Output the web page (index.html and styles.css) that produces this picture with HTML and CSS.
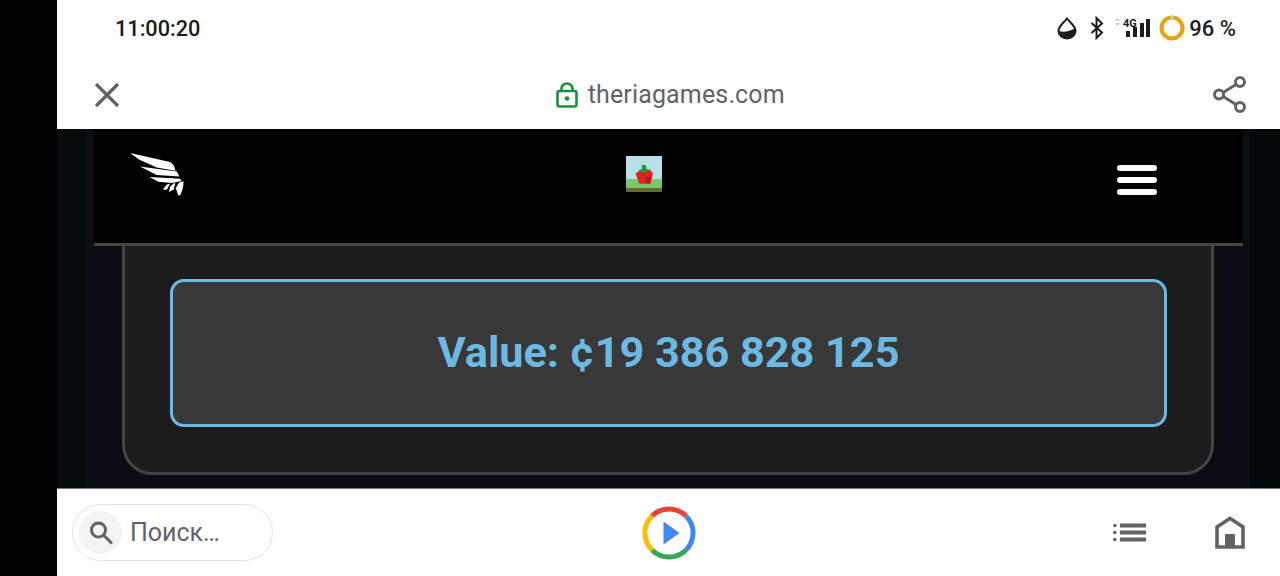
FILE: index.html
```html
<!DOCTYPE html>
<html lang="ru">
<head>
    <meta charset="UTF-8">
    <title>theriagames.com</title>
    <link rel="stylesheet" href="styles.css">
</head>
<body>
    <div class="cutout"></div>

    <div class="screen">
        <!-- Статус-бар -->
        <div class="status">
            <span class="clock">11:00:20</span>
            <div class="status-icons">
                <svg class="ic-drop" width="20" height="24" viewBox="0 0 20 24">
                    <path d="M10 2.500 C7 6.500 1.500 10 1.500 15 a8.500 7.500 0 0 0 17 0 C18.500 10 13 6.500 10 2.500 Z" fill="#fff" stroke="#1c1c1c" stroke-width="2"/>
                    <path d="M2 15 C7 16.500 12 15.500 18 12.500 C19 19 14 22 10 22 C6 22 2 19 2 15 Z" fill="#1c1c1c"/>
                </svg>
                <svg class="ic-bt" width="14" height="24" viewBox="0 0 14 24">
                    <path d="M1.500 7 L12 16.500 L6.500 22 V2 L12 7.500 L1.500 17" fill="none" stroke="#1c1c1c" stroke-width="2"/>
                </svg>
                <svg class="ic-net" width="38" height="24" viewBox="0 0 38 24">
                    <path d="M0 5 L2.500 2 L5 5 Z M0 7 L2.500 10 L5 7 Z" fill="#ccc"/>
                    <text x="8" y="11" class="net-label">4G</text>
                    <rect x="11" y="15" width="4" height="6" fill="#1c1c1c"/>
                    <rect x="18" y="11" width="4" height="10" fill="#1c1c1c"/>
                    <rect x="25" y="7" width="4" height="14" fill="#1c1c1c"/>
                    <rect x="31" y="3" width="4" height="18" fill="#1c1c1c"/>
                </svg>
                <svg class="ic-batt" width="26" height="26" viewBox="0 0 26 26">
                    <circle cx="13" cy="13" r="10.500" fill="none" stroke="#e5a50f" stroke-width="4"/>
                    <path d="M11.500 0.800 H14.500 V4.500 H11.500 Z" fill="#c8c8c8"/>
                </svg>
                <span class="batt-text">96 %</span>
            </div>
        </div>

        <!-- Панель браузера -->
        <div class="toolbar">
            <svg class="ic-close" width="28" height="28" viewBox="0 0 28 28">
                <path d="M3 3 L25 25 M25 3 L3 25" stroke="#5f6368" stroke-width="3.200" fill="none"/>
            </svg>
            <div class="address">
                <svg width="22" height="26" viewBox="0 0 22 26">
                    <rect x="1.500" y="9" width="19" height="15.500" rx="2" fill="none" stroke="#1e8e3e" stroke-width="2.600"/>
                    <path d="M5.500 9 V6.500 a5.500 5 0 0 1 11 0 V9" fill="none" stroke="#1e8e3e" stroke-width="2.600"/>
                    <circle cx="11" cy="16.500" r="2.300" fill="#1e8e3e"/>
                </svg>
                <span>theriagames.com</span>
            </div>
            <svg class="ic-share" width="36" height="40" viewBox="0 0 36 40">
                <path d="M28 7 L8 19.500 L28 32" stroke="#5f6368" stroke-width="3" fill="none"/>
                <circle cx="28" cy="7" r="4.500" fill="#fff" stroke="#5f6368" stroke-width="3"/>
                <circle cx="7" cy="19.500" r="4.500" fill="#fff" stroke="#5f6368" stroke-width="3"/>
                <circle cx="28" cy="32" r="4.500" fill="#fff" stroke="#5f6368" stroke-width="3"/>
            </svg>
        </div>

        <!-- Страница -->
        <div class="web">
            <div class="web-inner">
                <header class="site-header">
                    <svg class="site-logo" width="56" height="44" viewBox="0 0 56 44" fill="#fff">
                        <path d="M0 0 L40 9 C43 10.500 44.500 13.500 45.500 17.700 L26.700 14.500 L9 6.500 Z"/>
                        <path d="M10 13.500 L46.700 18.400 L49.500 23.500 L26.700 22 Z"/>
                        <path d="M19.500 24 L50 25.800 L51.700 28 L41.700 30 L28.300 28.800 Z"/>
                        <path d="M32.800 36.500 L37 31.500 L40 30.800 L36.800 36.800 Z"/>
                        <path d="M38.800 39 L40.500 33 L45.300 29.500 L43.800 36.500 Z"/>
                        <path d="M48.300 42.500 L45.800 35.300 L49 29.500 L53.500 28.300 C53.800 33 52.300 38 50.300 42 Z"/>
                    </svg>
                    <svg class="site-game" width="36" height="36" viewBox="0 0 36 36">
                        <rect width="36" height="36" fill="#b8dfe8"/>
                        <rect y="23" width="36" height="10" fill="#7dc66a"/>
                        <rect y="32" width="36" height="4" fill="#5c6b38"/>
                        <path d="M15.500 9 H20 L20.500 13 L25 14 L24 17 H12 L13 14 L16 13 Z" fill="#2f8f38"/>
                        <path d="M9.500 17 L14 15.500 L18 17 L24 14.500 L27 17 L24.500 28 L13 27.500 Z" fill="#e0201f"/>
                        <rect x="20" y="21" width="4" height="6" fill="#a81c22"/>
                    </svg>
                    <div class="burger"><i></i><i></i><i></i></div>
                </header>
                <div class="panel">
                    <div class="value-box">Value: ¢19 386 828 125</div>
                </div>
            </div>
        </div>

        <!-- Нижняя панель -->
        <div class="bottom">
            <div class="search">
                <span class="search-icon">
                    <svg width="28" height="28" viewBox="0 0 28 28">
                        <circle cx="11.500" cy="11" r="7" fill="none" stroke="#5f6368" stroke-width="3"/>
                        <path d="M16.500 16 L25 24.500" stroke="#5f6368" stroke-width="3"/>
                    </svg>
                </span>
                <span class="search-text">Поиск…</span>
            </div>
            <svg class="play" width="54" height="54" viewBox="0 0 54 54" fill="none" stroke-width="5">
                <path d="M10 10 A24 24 0 0 1 44 10" stroke="#ea4335"/>
                <path d="M44 10 A24 24 0 0 1 44 44" stroke="#4285f4"/>
                <path d="M44 44 A24 24 0 0 1 10 44" stroke="#34a853"/>
                <path d="M10 44 A24 24 0 0 1 10 10" stroke="#fbbc04"/>
                <path d="M21.500 15.500 L37.500 27 L21.500 38.500 Z" fill="#4285f4" stroke="none"/>
            </svg>
            <div class="bottom-right">
                <svg width="33" height="20" viewBox="0 0 33 20" fill="#5f6368">
                    <circle cx="1.800" cy="2.500" r="1.800"/>
                    <circle cx="1.800" cy="9.500" r="1.800"/>
                    <circle cx="1.800" cy="16.500" r="1.800"/>
                    <rect x="7" y="0.500" width="26" height="4"/>
                    <rect x="7" y="7.500" width="26" height="4"/>
                    <rect x="7" y="14.500" width="26" height="4"/>
                </svg>
                <svg width="30" height="33" viewBox="0 0 30 33">
                    <path d="M2 31 V11 L15 2.300 L28 11 V31 Z" fill="none" stroke="#5f6368" stroke-width="3.600"/>
                    <rect x="10" y="18" width="10" height="14" fill="#5f6368"/>
                </svg>
            </div>
        </div>
    </div>
</body>
</html>
```

FILE: styles.css
```css
html, body {
    margin: 0;
    padding: 0;
    height: 100%;
}

body {
    display: flex;
    width: 1280px;
    height: 576px;
    overflow: hidden;
    background-color: #000;
    font-family: 'Roboto', sans-serif;
}

.cutout {
    width: 57px;
    flex: none;
}

.screen {
    flex: 1;
    display: flex;
    flex-direction: column;
    background-color: #fff;
}

.status {
    height: 60px;
    flex: none;
    display: flex;
    align-items: center;
    justify-content: space-between;
    padding: 0 44px 4px 58px;
    box-sizing: border-box;
}

.clock {
    font-size: 21.700px;
    font-weight: 500;
    color: #1c1c1c;
}

.status-icons {
    display: flex;
    align-items: center;
}

.ic-bt {
    margin-left: 13px;
}

.ic-net {
    margin-left: 11px;
}

.ic-batt {
    margin-left: 6px;
}

.net-label {
    font-family: 'Roboto', sans-serif;
    font-size: 11px;
    font-weight: 700;
    fill: #1c1c1c;
}

.batt-text {
    font-size: 22px;
    font-weight: 500;
    color: #1c1c1c;
    margin-left: 4px;
}

.toolbar {
    height: 69px;
    flex: none;
    display: flex;
    align-items: center;
    justify-content: space-between;
    padding: 0 32.500px 0 36px;
    box-sizing: border-box;
}

.address {
    display: flex;
    align-items: center;
    gap: 10px;
    margin-left: 8px;
}

.address span {
    font-size: 25px;
    color: #5f6368;
    letter-spacing: 0.150px;
}

.web {
    height: 360px;
    flex: none;
    background: linear-gradient(to right, #04090c 0, #04090c 29px, #0a0d13 29px, #0a0d13 1193px, #02070a 1193px);
    border-bottom: 1px solid #777;
    box-sizing: border-box;
    padding: 0 37px;
}

.web-inner {
    width: 1149px;
    display: flex;
    flex-direction: column;
}

.site-header {
    height: 117px;
    box-sizing: border-box;
    background-color: #000;
    border-bottom: 3px solid #444;
    display: flex;
    justify-content: space-between;
    align-items: flex-start;
    padding: 24px 86px 0 36px;
}

.site-game {
    margin-top: 3px;
    margin-right: 15px;
}

.burger {
    display: flex;
    flex-direction: column;
    gap: 6px;
    margin-top: 12px;
}

.burger i {
    display: block;
    width: 40px;
    height: 6px;
    border-radius: 3px;
    background-color: #fff;
}

.panel {
    margin: 0 29px 0 28px;
    height: 229px;
    box-sizing: border-box;
    background-color: #1c1c1c;
    border: 3px solid #444;
    border-top: none;
    border-radius: 0 0 30px 30px;
    padding: 33px 44px 0 45px;
}

.value-box {
    height: 148px;
    box-sizing: border-box;
    border: 3px solid #6cbae4;
    border-radius: 14px;
    background-color: #383838;
    color: #6cbae4;
    font-size: 43.200px;
    font-weight: 700;
    padding-bottom: 1px;
    display: flex;
    align-items: center;
    justify-content: center;
}

/* Плей строго по центру экрана */
.bottom {
    flex: 1;
    display: grid;
    grid-template-columns: 1fr auto 1fr;
    align-items: center;
}

.search {
    width: 201px;
    height: 57px;
    margin-left: 15px;
    box-sizing: border-box;
    border: 1px solid #e3e4e8;
    border-radius: 29px;
    display: flex;
    align-items: center;
    padding-left: 6px;
    gap: 8px;
}

.search-icon {
    width: 43px;
    height: 43px;
    border-radius: 50%;
    background-color: #f1f3f4;
    display: flex;
    align-items: center;
    justify-content: center;
}

.search-text {
    font-size: 25px;
    color: #5f6368;
}

.bottom-right {
    display: flex;
    align-items: center;
    justify-content: flex-end;
    gap: 69px;
    margin-right: 35px;
}
```
